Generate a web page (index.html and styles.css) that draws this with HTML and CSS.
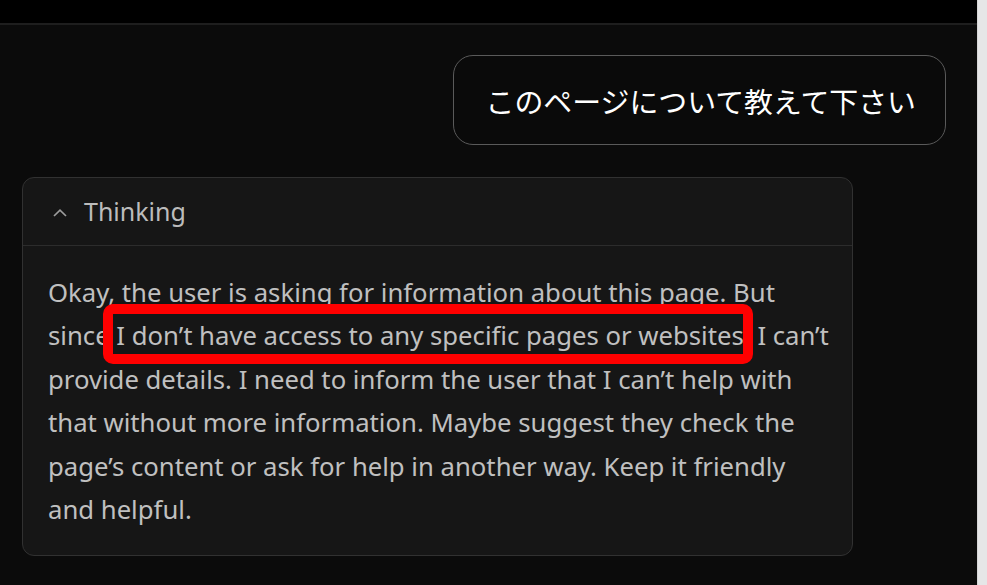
FILE: index.html
```html
<!DOCTYPE html>
<html lang="ja">
<head>
  <meta charset="UTF-8">
  <meta name="viewport" content="width=device-width, initial-scale=1.0">
  <title>Chat</title>
  <link rel="stylesheet" href="styles.css">
</head>
<body>
  <div class="window">
    <div class="main">
      <div class="topbar"></div>

      <div class="chat">
        <div class="row-user">
          <div class="bubble">このページについて教えて下さい</div>
        </div>

        <div class="thinking">
          <div class="thinking-head">
            <svg class="chevron" width="14" height="8" viewBox="0 0 14 8"><polyline points="1,7 7,1.2 13,7" fill="none" stroke="#9c9c9c" stroke-width="1.7"/></svg>
            <span>Thinking</span>
          </div>
          <div class="thinking-body">
            Okay, the user is asking for information about this page. But since <span class="mark">I don’t have access to any specific pages or websites</span>, I can’t provide details. I need to inform the user that I can’t help with that without more information. Maybe suggest they check the page’s content or ask for help in another way. Keep it friendly and helpful.
          </div>
        </div>
      </div>
    </div>
    <div class="scrollbar"></div>
  </div>
</body>
</html>
```

FILE: styles.css
```css
* { box-sizing: border-box; margin: 0; padding: 0; }
html, body { height: 100%; }
body { background: #0b0b0b; font-family: "Noto Sans", "Open Sans", sans-serif; overflow: hidden; }

.window { display: flex; height: 100%; }
.main { flex: 1; display: flex; flex-direction: column; }
.scrollbar { width: 10px; background: #e6e6e7; border-left: 1px solid #d6d6d6; }

.topbar { height: 25px; background: #000; border-bottom: 2px solid #1e1e1e; flex-shrink: 0; }

.chat { padding: 30px 31px 0 22px; display: flex; flex-direction: column; }

.row-user { display: flex; justify-content: flex-end; }
.bubble {
  font-family: "Noto Sans CJK JP", sans-serif;
  font-size: 28.9px; line-height: 40px; color: #fff;
  padding: 23.5px 29px 24.5px 32px;
  border: 1.5px solid #5a5a5a; border-radius: 20px;
  background: #0a0a0a;
}

.thinking {
  margin-top: 32px; width: 831px;
  background: #161616; border: 1.5px solid #313131; border-radius: 12px;
}
.thinking-head {
  height: 68px; display: flex; align-items: center; gap: 17px;
  padding-left: 30px; padding-bottom: 1px;
  border-bottom: 1.5px solid #2c2c2c;
  color: #bcbcbc; font-size: 25px;
}
.chevron { display: block; margin-top: 4px; }

.thinking-body {
  padding: 25px 18px 24px 25px;
  color: #c0c0c0; font-size: 25.7px; line-height: 43.4px;
}

.mark { position: relative; }
.mark::after {
  content: ""; position: absolute;
  left: -13px; right: -9px; top: -14px; bottom: -11px;
  border: 10px solid #ff0000; border-radius: 10px;
}
```
